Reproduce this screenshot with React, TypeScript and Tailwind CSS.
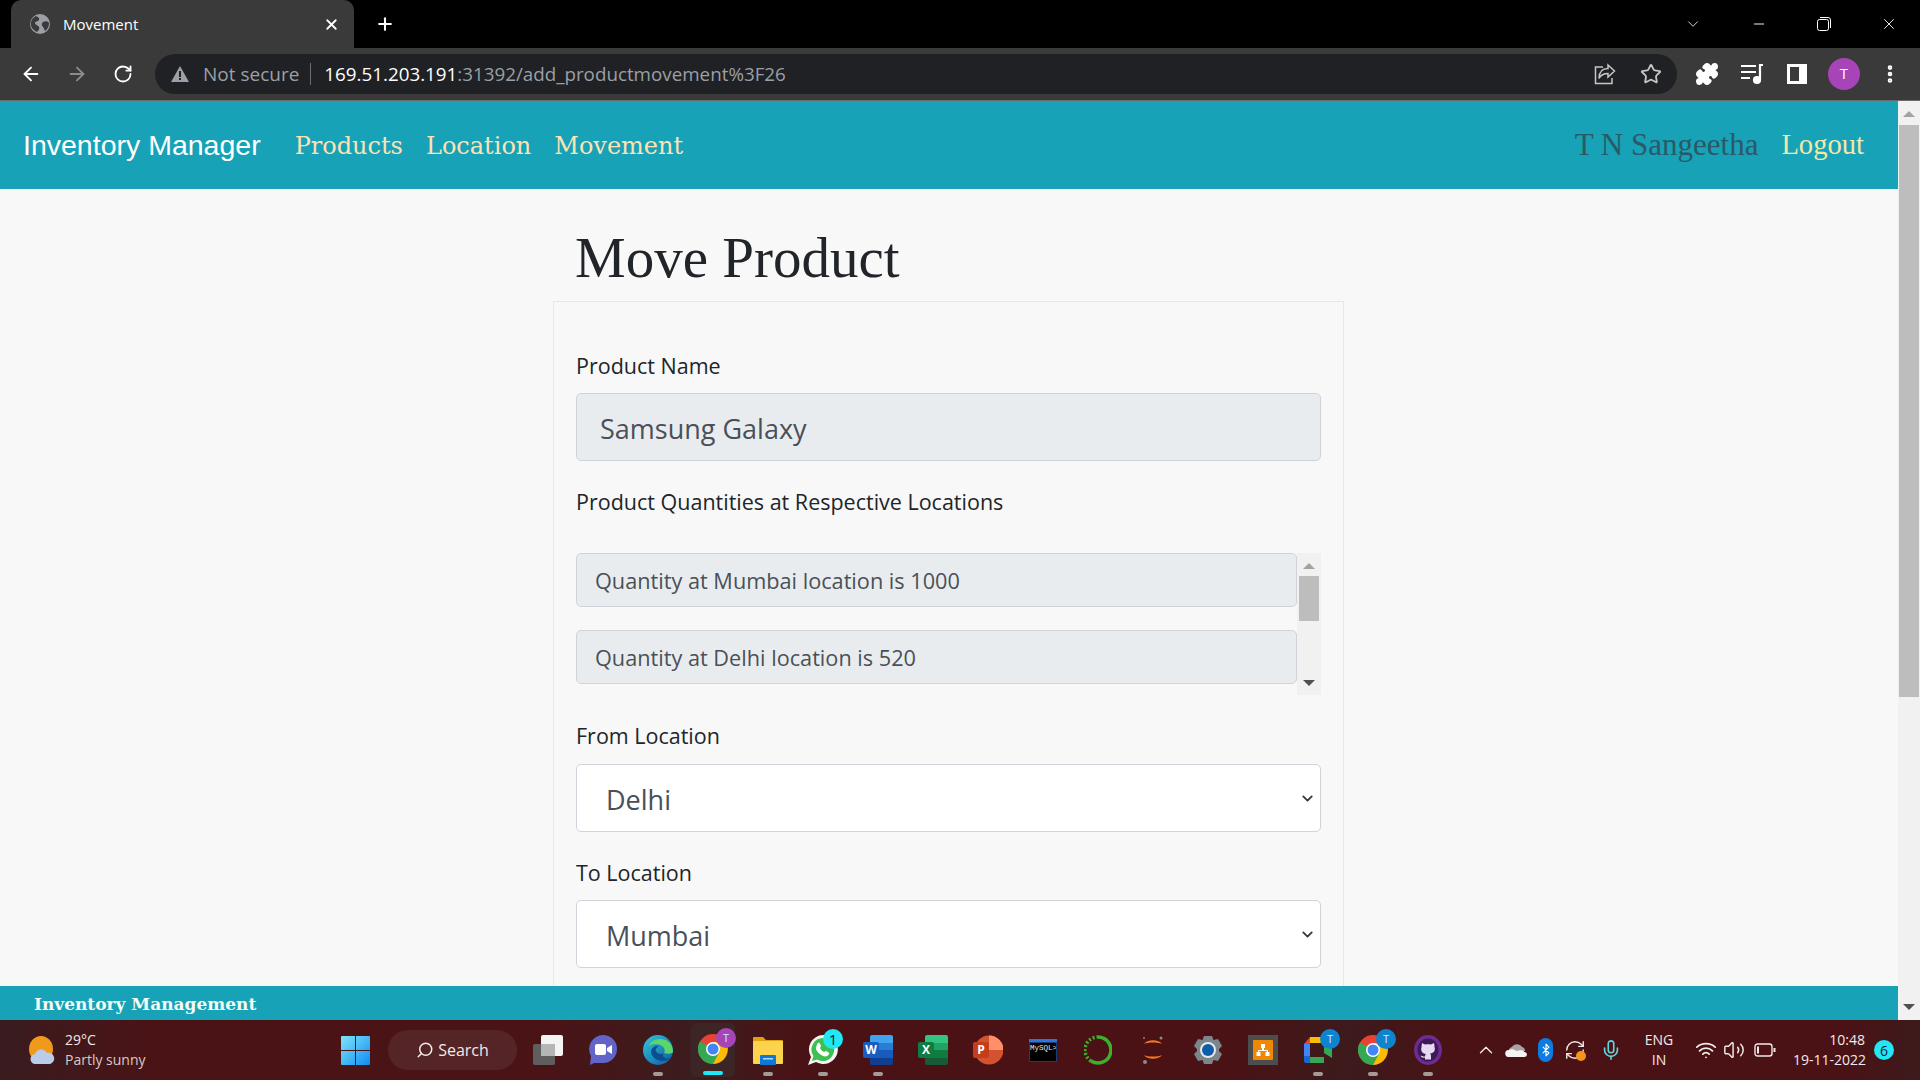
import React from "react";
import { ArrowLeft, ArrowRight, RotateCw, Plus, X, ChevronDown, Minus, Star, Puzzle, EllipsisVertical, Search, ChevronUp, Wifi, Volume2, Mic, Bluetooth, RefreshCw } from "lucide-react";

const SANS = "font-['Open_Sans','Noto_Sans',sans-serif]";

function Globe() {
  return (
    <svg width="20" height="20" viewBox="0 0 20 20">
      <circle cx="10" cy="10" r="10" fill="#9aa0a6" />
      <path d="M6 2c2 1 4 2 3 4S5 7 5 9s3 2 4 4-1 4-2 5C3 16 0 13 1 8c.5-3 3-5 5-6zM13 8c2-1 5-1 6 1 0 3-1 6-4 8-1-2-1-3-2-4s-2-3 0-5z" fill="#3a3a3b" />
    </svg>
  );
}

function ShareIcon() {
  return (
    <svg width="22" height="22" viewBox="0 0 22 22" fill="none" stroke="#c4c7c5" strokeWidth="1.5">
      <path d="M9 4H1.5v16.5H18V15" />
      <path d="M14 2l6.5 6-6.5 6v-3.5c-4 0-7 1-9 5 0-6 3-10 9-10z" />
    </svg>
  );
}

function MediaIcon() {
  return (
    <svg width="24" height="22" viewBox="0 0 24 22" fill="none" stroke="#fff" strokeWidth="2.2">
      <path d="M1 3h15M1 9h15M1 15h9" />
      <path d="M20 16V2h3" />
      <circle cx="17" cy="17" r="3" fill="#fff" />
    </svg>
  );
}

function SideIcon() {
  return (
    <svg width="20" height="20" viewBox="0 0 20 20">
      <rect width="20" height="20" fill="#fff" />
      <rect x="3" y="3" width="9" height="14" fill="#3a3a3b" />
    </svg>
  );
}

function RestoreIcon() {
  return (
    <svg width="14" height="14" viewBox="0 0 14 14" fill="none" stroke="#fff" strokeWidth="1">
      <rect x="0.5" y="2.5" width="11" height="11" rx="2" />
      <path d="M3 .5h8a2.5 2.5 0 0 1 2.5 2.5v8" />
    </svg>
  );
}

function Weather() {
  return (
    <svg width="28" height="28" viewBox="0 0 28 28">
      <ellipse cx="13" cy="13" rx="12" ry="13" fill="#f09a1c" />
      <path d="M8 28a5 5 0 0 1-1-10 6.500 6.500 0 0 1 12-1 5.500 5.500 0 0 1 3 11z" fill="#b9cdeb" />
    </svg>
  );
}

function WinLogo() {
  return (
    <svg width="29" height="29" viewBox="0 0 29 29">
      <defs>
        <linearGradient id="win" x1="0" y1="0" x2="1" y2="1">
          <stop offset="0" stopColor="#7fe6fb" />
          <stop offset="1" stopColor="#0f8cf2" />
        </linearGradient>
      </defs>
      <path d="M0 1a1 1 0 0 1 1-1h13v14H0zM15 0h13a1 1 0 0 1 1 1v13H15zM0 15h14v14H1a1 1 0 0 1-1-1zM15 15h14v13a1 1 0 0 1-1 1H15z" fill="url(#win)" />
    </svg>
  );
}

function TaskView() {
  return (
    <svg width="30" height="30" viewBox="0 0 30 30">
      <rect x="0" y="9" width="22" height="21" rx="2" fill="#5e5e5e" />
      <rect x="8" y="0" width="22" height="21" rx="2" fill="#f4f4f4" />
      <rect x="8" y="9" width="14" height="12" fill="#b5b5b5" />
    </svg>
  );
}

function Meet() {
  return (
    <svg width="30" height="30" viewBox="0 0 30 30">
      <path d="M15 0a14 14 0 0 1 0 28H6l-4 2 1-9A14 14 0 0 1 15 0z" fill="#6264c7" />
      <rect x="7" y="9" width="11" height="11" rx="2" fill="#fff" />
      <path d="M19 13l5-3v9l-5-3z" fill="#fff" />
    </svg>
  );
}

function Edge() {
  return (
    <svg width="30" height="30" viewBox="0 0 30 30">
      <defs>
        <linearGradient id="edge" x1="0" y1="0" x2="1" y2="1">
          <stop offset="0" stopColor="#33c6d8" />
          <stop offset="1" stopColor="#0c59a4" />
        </linearGradient>
      </defs>
      <circle cx="15" cy="15" r="15" fill="url(#edge)" />
      <path d="M30 17C30 8 24 4 17 4 11 4 7 7 6 11c4-3 12-3 15 2 1 2 1 4 0 5 4 1 8 1 9-1z" fill="#5bd66a" />
      <path d="M21 18c-3 2-7 1-8-2-1-2 1-4 3-5-3-1-7 1-8 5 0 5 5 10 12 10 3 0 5-1 7-3-3 1-6 0-7-2 0-1 0-2 1-3z" fill="#0a4f8f" />
    </svg>
  );
}

function Chrome() {
  return (
    <svg width="30" height="30" viewBox="0 0 30 30">
      <circle cx="15" cy="15" r="15" fill="#e94235" />
      <path d="M15 15L2 7.500A15 15 0 0 0 15 30l7.500-13z" fill="#34a853" />
      <path d="M15 8h13a15 15 0 0 1-13 22l7-13z" fill="#fbbc04" />
      <circle cx="15" cy="15" r="7" fill="#fff" />
      <circle cx="15" cy="15" r="5.500" fill="#4285f4" />
    </svg>
  );
}

function Folder() {
  return (
    <svg width="30" height="30" viewBox="0 0 30 30">
      <path d="M0 3a1 1 0 0 1 1-1h9l3 3h16a1 1 0 0 1 1 1v4H0z" fill="#e0a10f" />
      <rect x="0" y="6" width="30" height="23" rx="1" fill="#fbd34d" />
      <rect x="7" y="20" width="16" height="10" rx="1" fill="#0f78d4" />
      <rect x="10" y="23" width="10" height="1.500" fill="#a5dcfa" />
    </svg>
  );
}

function Whatsapp() {
  return (
    <svg width="30" height="30" viewBox="0 0 30 30">
      <path d="M15 0a14.500 14.500 0 1 1-7 27L0 30l3-8A14.500 14.500 0 0 1 15 0z" fill="#f4f4f4" />
      <path d="M15 3a11.500 11.500 0 1 1-6 21.500L4 26l1.500-5A11.500 11.500 0 0 1 15 3z" fill="#3dbf52" />
      <path d="M10 8c1-1 2 0 3 3 0 1-1 1-1 2 1 2 2 3 4 4 1 0 1-1 2-1 2 1 4 2 3 3-1 2-3 3-6 2-4-2-6-4-7-7 0-3 1-5 2-6z" fill="#fff" />
    </svg>
  );
}

function OfficeDoc({ letter, a, b, c, d, dark }: { letter: string; a: string; b: string; c: string; d: string; dark: string }) {
  return (
    <div className="relative w-[30px] h-[30px]">
      <div className="absolute left-[7px] top-0 w-[23px] h-[30px] rounded-[2px] overflow-hidden flex flex-col">
        <div className="flex-1" style={{ background: a }} />
        <div className="flex-1" style={{ background: b }} />
        <div className="flex-1" style={{ background: c }} />
        <div className="flex-1" style={{ background: d }} />
      </div>
      <div className={`absolute left-0 top-[7px] w-[16px] h-[16px] rounded-[2px] flex items-center justify-center text-white text-[12px] font-bold ${SANS}`} style={{ background: dark }}>
        {letter}
      </div>
    </div>
  );
}

function PowerPoint() {
  return (
    <div className="relative w-[30px] h-[30px]">
      <svg width="30" height="30" viewBox="0 0 30 30" className="absolute left-0 top-0">
        <circle cx="16" cy="15" r="14.500" fill="#d35230" />
        <path d="M16 .5A14.500 14.500 0 0 1 30.500 15H16z" fill="#ff8f6b" />
      </svg>
      <div className={`absolute left-0 top-[7px] w-[16px] h-[16px] rounded-[2px] bg-[#c43e1c] flex items-center justify-center text-white text-[12px] font-bold ${SANS}`}>P</div>
    </div>
  );
}

function MySql() {
  return (
    <div className="w-[28px] h-[23px] bg-[#1c3d7a] border-t-[3px] border-t-[#2f74d8] p-px flex">
      <div className="flex-1 bg-black font-['Liberation_Mono',monospace] text-[7.5px] leading-[10px] text-gray-200 whitespace-nowrap overflow-hidden">MySQL&gt;</div>
    </div>
  );
}

function Ring() {
  return (
    <svg width="28" height="30" viewBox="0 0 28 30" fill="none">
      <path d="M14 2a13 13 0 1 1-7 24" stroke="#3db02c" strokeWidth="3.500" />
      <path d="M7 26A13 13 0 0 1 14 2" stroke="#3db02c" strokeWidth="3.500" strokeDasharray="2 2" />
    </svg>
  );
}

function Jupyter() {
  return (
    <svg width="24" height="30" viewBox="0 0 24 30">
      <path d="M3 9c3-5 15-5 18 0-4-2-14-2-18 0zM3 20c3 5 15 5 18 0-4 2-14 2-18 0z" fill="#f37726" />
      <circle cx="20" cy="3" r="1.500" fill="#8a8a8a" />
      <circle cx="4" cy="27" r="2" fill="#8a8a8a" />
      <circle cx="3" cy="3" r="1" fill="#8a8a8a" />
    </svg>
  );
}

function Gear() {
  return (
    <svg width="30" height="30" viewBox="0 0 30 30">
      <path d="M11 1h8l1.500 4 4.500-1 4 7-3 3v2l3 3-4 7-4.500-1L19 29h-8l-1.500-4-4.500 1-4-7 3-3v-2L1 11l4-7 4.500 1z" fill="#7d858c" />
      <circle cx="15" cy="15" r="8" fill="#e8e8e8" />
      <circle cx="15" cy="15" r="6" fill="#0f5ca8" />
    </svg>
  );
}

function DrawIo() {
  return (
    <div className="w-[30px] h-[30px] bg-[#4d4d4d] flex items-center justify-center">
      <svg width="20" height="20" viewBox="0 0 20 20">
        <rect width="20" height="20" rx="1" fill="#f08705" />
        <path d="M8 4h4v4h-1v2h4v2h1.500v4h-4v-4H14v-1H6v1h1.500v4h-4v-4H5v-2h4V8H8z" fill="#fff" />
      </svg>
    </div>
  );
}

function GMeet() {
  return (
    <svg width="28" height="26" viewBox="0 0 28 26">
      <path d="M6 0h14v6H6z" fill="#fbbc04" />
      <path d="M6 0v7H0z" fill="#ea4335" />
      <path d="M0 7h6v12H0z" fill="#4285f4" />
      <path d="M0 19h6v7H2a2 2 0 0 1-2-2z" fill="#1967d2" />
      <path d="M6 20h14v6H6z" fill="#34a853" />
      <path d="M20 0v10l8-5v16l-8-5v8" fill="#34a853" />
    </svg>
  );
}

function GitHubDesk() {
  return (
    <svg width="28" height="30" viewBox="0 0 28 30">
      <ellipse cx="14" cy="15" rx="14" ry="15" fill="#6e2c93" />
      <ellipse cx="14" cy="15" rx="10.500" ry="11.500" fill="#3c1a55" />
      <path d="M8 8l3 1.500c2-.5 4-.5 6 0L20 8c.5 2 .5 3 .5 4 1 3 0 6-4.500 6.500.8.500 1 1.500 1 3v3h-6v-2c-2 .5-4 0-4.500-2 1 0 2 1 3 1h1.500c0-1 .5-2 1-2.500-4-.5-5.500-3.500-4.500-6.500 0-1 0-2 .5-4z" fill="#e8d8f2" />
    </svg>
  );
}

function OneDrive() {
  return (
    <svg width="22" height="14" viewBox="0 0 22 14">
      <path d="M4 8a4 4 0 0 1 3-4 6 6 0 0 1 10 0 4 4 0 0 1 3 4z" fill="#a9a3a3" />
      <path d="M4 14a3.500 3.500 0 0 1-.5-7c3-1 5-1 8 1 3-1 7-1 8 1a2.500 2.500 0 0 1 0 5z" fill="#f5f5f5" />
    </svg>
  );
}

function Battery() {
  return (
    <svg width="22" height="14" viewBox="0 0 22 14" fill="none" stroke="#f3e9e9" strokeWidth="1.4">
      <rect x="1" y="1" width="17" height="12" rx="2.500" />
      <path d="M20.500 5v4" strokeWidth="2" />
      <rect x="3" y="3.500" width="2" height="7" fill="#f3e9e9" strokeWidth="0" />
    </svg>
  );
}

function Dot() {
  return <div className="w-[10px] h-[4px] rounded-full bg-[#a39a9a]" />;
}

function Avatar({ color, size = 20 }: { color: string; size?: number }) {
  return (
    <div className={`absolute -right-[8px] -top-[6px] rounded-full flex items-center justify-center text-[11px] text-[#d5e6f5] ${SANS}`} style={{ background: color, width: size, height: size }}>
      T
    </div>
  );
}

function TaskIcon({ children, dot, left }: { children: React.ReactNode; dot?: boolean; left: string }) {
  return (
    <div className={`${left} w-[44px] h-[56px] flex flex-col items-center justify-end shrink-0`}>
      <div className="relative h-[30px] flex items-center justify-center">{children}</div>
      <div className="h-[4px] mt-[7px] mb-[2px]">{dot ? <Dot /> : null}</div>
    </div>
  );
}

function TextBox({ text, size, h, px }: { text: string; size: string; h: string; px: string }) {
  return (
    <div className={`${h} ${px} ${size} rounded-[5px] border border-[#ced4da] bg-[#e9ecef] text-[#495057] flex items-center`}>
      {text}
    </div>
  );
}

function SelectBox({ value }: { value: string }) {
  return (
    <div className="h-[68px] pl-[29px] pr-[4px] text-[27px] rounded-[5px] border border-[#ced4da] bg-white text-[#495057] flex items-center justify-between">
      <span className="pt-[5px]">{value}</span>
      <ChevronDown size={17} strokeWidth={2.6} className="text-[#343a40]" />
    </div>
  );
}

function FieldLabel({ children }: { children: React.ReactNode }) {
  return <div className="text-[21.5px] leading-[34px] text-[#212529]">{children}</div>;
}

export default function App() {
  return (
    <div className={`h-[1080px] w-[1920px] overflow-hidden flex flex-col bg-[#f8f8f8] ${SANS}`}>
      {/* tab strip */}
      <div className="h-[48px] bg-black flex items-end shrink-0 pl-[11px]">
        <div className="w-[343px] h-[48px] rounded-t-[10px] bg-[#3a3a3b] flex items-center pl-[19px] pr-[14px] text-white text-[15px] mt-0">
          <Globe />
          <span className="ml-[13px] flex-1">Movement</span>
          <X size={17} strokeWidth={2.5} />
        </div>
        <div className="h-[48px] flex items-center ml-[21px] text-white">
          <Plus size={20} strokeWidth={2.5} />
        </div>
        <div className="flex-1" />
        <div className="h-[48px] flex items-center text-white pr-[22px]">
          <ChevronDown size={18} strokeWidth={1.2} className="mr-[49px] text-gray-200" />
          <Minus size={16} strokeWidth={1.4} className="mr-[50px]" />
          <div className="mr-[49px]">
            <RestoreIcon />
          </div>
          <X size={18} strokeWidth={1.2} />
        </div>
      </div>

      {/* toolbar */}
      <div className="h-[53px] bg-[#3a3a3b] flex items-center shrink-0 border-b border-[#6b6b6b] pb-[1px]">
        <ArrowLeft size={22} className="ml-[20px] text-white" strokeWidth={2} />
        <ArrowRight size={22} className="ml-[24px] text-[#8a8b8c]" strokeWidth={2} />
        <RotateCw size={20} className="ml-[25px] text-white" strokeWidth={2.2} />
        <div className="ml-[22px] w-[1522px] h-[40px] rounded-full bg-[#202124] flex items-center pl-[16px] pr-[15px] text-[19px] whitespace-nowrap shrink-0">
          <svg width="18" height="16" viewBox="0 0 18 16">
            <path d="M9 0l9 16H0z" fill="#9aa0a6" />
            <path d="M8 5h2v6H8zM8 12h2v2H8z" fill="#202124" />
          </svg>
          <span className="ml-[14px] pt-px text-[#9aa0a6]">Not secure</span>
          <div className="w-px h-[22px] bg-[#6c6e71] ml-[11px] mr-[13px]" />
          <span className="pt-px text-[18.8px] text-white">169.51.203.191</span>
          <span className="pt-px text-[18.8px] text-[#9aa0a6]">:31392/add_productmovement%3F26</span>
          <div className="flex-1" />
          <ShareIcon />
          <Star size={22} strokeWidth={2} className="ml-[24px] text-[#c4c7c5]" />
        </div>
        <Puzzle size={24} fill="#fff" className="ml-[18px] text-white" />
        <div className="ml-[21px]">
          <MediaIcon />
        </div>
        <div className="ml-[23px]">
          <SideIcon />
        </div>
        <div className="ml-[21px] w-[32px] h-[32px] rounded-full bg-[#a744b8] flex items-center justify-center text-white text-[15px]">T</div>
        <EllipsisVertical size={22} strokeWidth={3} className="ml-[19px] text-white" />
      </div>

      {/* page */}
      <div className="flex-1 min-h-0 flex">
        <div className="flex-1 min-w-0 flex flex-col">
          <nav className="h-[88px] bg-[#17a2b8] flex items-center pl-[23px] pr-[34px] shrink-0">
            <span className="font-['Liberation_Sans',sans-serif] text-[28.5px] text-white">Inventory Manager</span>
            <div className="ml-[34px] pt-px flex gap-[23px] font-['DejaVu_Serif',serif] text-[24px] text-[#fbe3b5]">
              <span>Products</span>
              <span>Location</span>
              <span>Movement</span>
            </div>
            <div className="flex-1" />
            <span className="font-['Liberation_Serif',serif] text-[31px] text-[#2a5a66]">T N Sangeetha</span>
            <span className="ml-[23px] font-['Liberation_Serif',serif] text-[28.6px] text-[#f2e8a8]">Logout</span>
          </nav>
          <main className="flex-1 min-h-0 overflow-hidden">
            <div className="w-[791px] ml-[553px]">
              <h1 className="pl-[22px] pt-[35px] pb-[9px] font-['Liberation_Serif',serif] text-[57px] leading-[68px] text-[#212529]">Move Product</h1>
              <div className="border border-[#e5e7e9] px-[22px] pt-[47px] flex flex-col">
                <FieldLabel>Product Name</FieldLabel>
                <div className="mt-[10px]">
                  <TextBox text="Samsung Galaxy" size="text-[27px] pt-[4px]" h="h-[68px]" px="px-[23px]" />
                </div>
                <div className="mt-[24px]">
                  <FieldLabel>Product Quantities at Respective Locations</FieldLabel>
                </div>
                <div className="mt-[34px] h-[142px] flex">
                  <div className="w-[721px] flex flex-col gap-[23px]">
                    <TextBox text="Quantity at Mumbai location is 1000" size="text-[21.7px] pt-[3px]" h="h-[54px]" px="px-[18px]" />
                    <TextBox text="Quantity at Delhi location is 520" size="text-[21.7px] pt-[3px]" h="h-[54px]" px="px-[18px]" />
                  </div>
                  <div className="flex-1 bg-[#f1f1f1] flex flex-col items-center">
                    <div className="mt-[10px] w-0 h-0 border-x-[6px] border-x-transparent border-b-[6px] border-b-[#a3a3a3]" />
                    <div className="mt-[7px] w-[20px] h-[45px] bg-[#bdbdbd]" />
                    <div className="flex-1" />
                    <div className="mb-[9px] w-0 h-0 border-x-[6px] border-x-transparent border-t-[6px] border-t-[#505050]" />
                  </div>
                </div>
                <div className="mt-[24px]">
                  <FieldLabel>From Location</FieldLabel>
                </div>
                <div className="mt-[11px]">
                  <SelectBox value="Delhi" />
                </div>
                <div className="mt-[24px]">
                  <FieldLabel>To Location</FieldLabel>
                </div>
                <div className="mt-[10px]">
                  <SelectBox value="Mumbai" />
                </div>
                <div className="h-[40px]" />
              </div>
            </div>
          </main>
          <footer className="h-[34px] bg-[#17a2b8] flex items-center pl-[34px] pt-[4px] shrink-0 font-['DejaVu_Serif',serif] font-bold text-[17px] text-[#f4fbf2]">
            Inventory Management
          </footer>
        </div>
        {/* page scrollbar */}
        <div className="w-[22px] bg-[#f1f1f1] flex flex-col items-center">
          <div className="mt-[10px] w-0 h-0 border-x-[6px] border-x-transparent border-b-[6px] border-b-[#a3a3a3]" />
          <div className="mt-[8px] w-[20px] h-[572px] bg-[#bdbdbd]" />
          <div className="flex-1" />
          <div className="mb-[10px] w-0 h-0 border-x-[6px] border-x-transparent border-t-[6px] border-t-[#505050]" />
        </div>
      </div>

      {/* taskbar */}
      <div className="h-[60px] shrink-0 bg-[linear-gradient(90deg,#391c1f_0%,#4a1316_8%,#4a1316_28%,#3c1c1e_36%,#4a1215_42%,#4a1215_64%,#3d1a1c_70%,#4a1215_76%,#4a1215_96%,#3d1a1c_100%)] flex items-center text-[#f3e9e9] relative">
        <div className="ml-[28px] flex items-center w-[313px]">
          <Weather />
          <div className="ml-[9px] text-[14px] leading-[20px]">
            <div>29°C</div>
            <div className="text-[#d8c8c8]">Partly sunny</div>
          </div>
        </div>
        <WinLogo />
        <div className="ml-[18px] w-[129px] h-[40px] rounded-full bg-[#552426] flex items-center justify-center text-[16px]">
          <Search size={18} className="-scale-x-100 mr-[4px]" />
          Search
        </div>
        <div className="ml-[9px] flex items-center">
          <TaskIcon left="ml-0"><TaskView /></TaskIcon>
          <TaskIcon left="ml-[11px]"><Meet /></TaskIcon>
          <TaskIcon left="ml-[11px]" dot><Edge /></TaskIcon>
          <div className="ml-[11px] relative w-[44px] h-[54px] rounded-[5px] bg-[#3d2526] flex flex-col items-center justify-end shrink-0">
            <div className="relative h-[30px] flex items-center justify-center">
              <Chrome />
              <Avatar color="#a744b8" />
            </div>
            <div className="h-[4px] w-[20px] mt-[7px] mb-[2px] rounded-full bg-[#22e7f5]" />
          </div>
          <TaskIcon left="ml-[11px]" dot><Folder /></TaskIcon>
          <TaskIcon left="ml-[11px]" dot>
            <Whatsapp />
            <div className="absolute -right-[5px] -top-[6px] w-[20px] h-[20px] rounded-full bg-[#22e7f5] text-[#123] text-[15px] flex items-center justify-center">1</div>
          </TaskIcon>
          <TaskIcon left="ml-[11px]" dot><OfficeDoc letter="W" a="#41a5ee" b="#2b7cd3" c="#185abd" d="#103f91" dark="#1a5cbf" /></TaskIcon>
          <TaskIcon left="ml-[11px]"><OfficeDoc letter="X" a="#33c481" b="#21a366" c="#107c41" d="#185c37" dark="#107c41" /></TaskIcon>
          <TaskIcon left="ml-[11px]"><PowerPoint /></TaskIcon>
          <TaskIcon left="ml-[11px]"><MySql /></TaskIcon>
          <TaskIcon left="ml-[11px]"><Ring /></TaskIcon>
          <TaskIcon left="ml-[11px]"><Jupyter /></TaskIcon>
          <TaskIcon left="ml-[11px]"><Gear /></TaskIcon>
          <TaskIcon left="ml-[11px]"><DrawIo /></TaskIcon>
          <TaskIcon left="ml-[11px]" dot>
            <GMeet />
            <Avatar color="#0d84d0" />
          </TaskIcon>
          <TaskIcon left="ml-[11px]" dot>
            <Chrome />
            <Avatar color="#0d84d0" />
          </TaskIcon>
          <TaskIcon left="ml-[11px]" dot><GitHubDesk /></TaskIcon>
        </div>
        <ChevronUp size={22} strokeWidth={1.5} className="ml-[25px]" />
        <div className="ml-[8px]">
          <OneDrive />
        </div>
        <div className="ml-[11px] w-[15px] h-[24px] rounded-full bg-[#0d7be0] flex items-center justify-center">
          <Bluetooth size={14} strokeWidth={2} className="text-white" />
        </div>
        <div className="relative ml-[11px]">
          <RefreshCw size={22} strokeWidth={1.5} />
          <div className="absolute right-0 bottom-0 w-[10px] h-[10px] rounded-full bg-[#f7941d]" />
        </div>
        <Mic size={22} strokeWidth={1.8} className="ml-[14px] text-[#5dd5dc]" />
        <div className="ml-[17px] w-[40px] text-center text-[14px] leading-[20px]">
          <div>ENG</div>
          <div>IN</div>
        </div>
        <Wifi size={22} strokeWidth={2} className="ml-[16px]" />
        <Volume2 size={22} strokeWidth={1.6} className="ml-[6px]" />
        <div className="ml-[9px]">
          <Battery />
        </div>
        <div className="ml-[17px] w-[72px] text-right text-[14px] leading-[20px] whitespace-nowrap">
          <div>10:48</div>
          <div>19-11-2022</div>
        </div>
        <div className="ml-[9px] w-[20px] h-[20px] rounded-full bg-[#22e7f5] text-[#123] text-[14px] flex items-center justify-center">6</div>
      </div>
    </div>
  );
}
